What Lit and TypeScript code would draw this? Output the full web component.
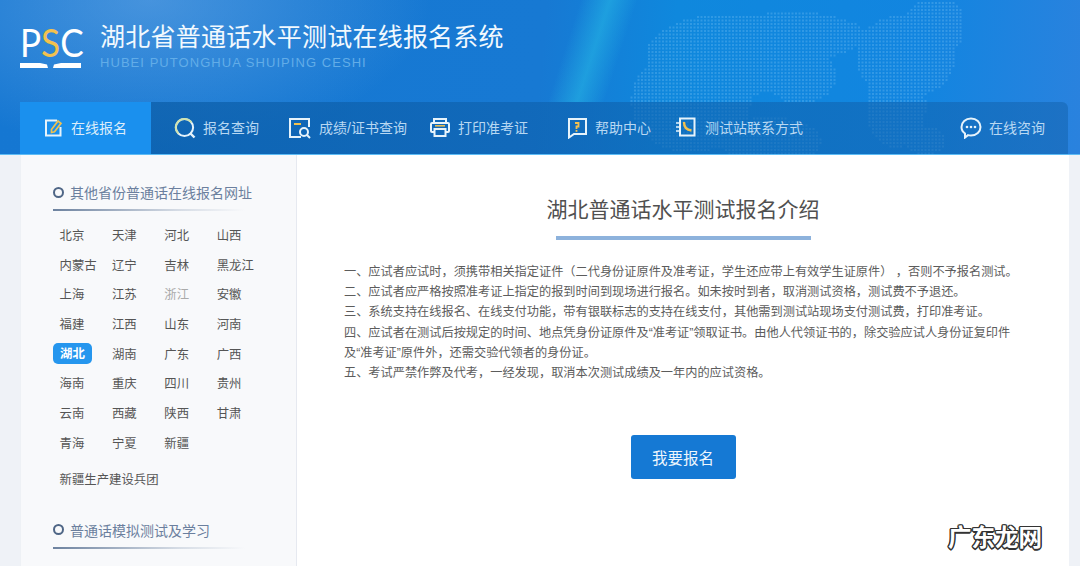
import { LitElement, html, css, svg } from "lit";
import { customElement } from "lit/decorators.js";

const ROWS = [
  ["北京", "天津", "河北", "山西"],
  ["内蒙古", "辽宁", "吉林", "黑龙江"],
  ["上海", "江苏", "浙江", "安徽"],
  ["福建", "江西", "山东", "河南"],
  ["湖北", "湖南", "广东", "广西"],
  ["海南", "重庆", "四川", "贵州"],
  ["云南", "西藏", "陕西", "甘肃"],
  ["青海", "宁夏", "新疆"],
];

const LINES = [
  "一、应试者应试时，须携带相关指定证件（二代身份证原件及准考证，学生还应带上有效学生证原件） ，否则不予报名测试。",
  "二、应试者应严格按照准考证上指定的报到时间到现场进行报名。如未按时到者，取消测试资格，测试费不予退还。",
  "三、系统支持在线报名、在线支付功能，带有银联标志的支持在线支付，其他需到测试站现场支付测试费，打印准考证。",
  "四、应试者在测试后按规定的时间、地点凭身份证原件及“准考证”领取证书。由他人代领证书的，除交验应试人身份证复印件",
  "及“准考证”原件外，还需交验代领者的身份证。",
  "五、考试严禁作弊及代考，一经发现，取消本次测试成绩及一年内的应试资格。",
];

const Y = "#f2c14e";
const W = "#e6f3fb";
const ICONS = {
  edit: svg`<path d="M13 2.500H2v15h14.500V9" fill="none" stroke="${W}" stroke-width="2"/><path d="M7.500 11.500 14 3l3 2.300-6.500 8.500-3 .7z" fill="none" stroke="${Y}" stroke-width="1.700"/>`,
  search: svg`<circle cx="10.500" cy="10.500" r="8.600" fill="none" stroke="${W}" stroke-width="2"/><path d="M4.400 16.600A8.600 8.600 0 0 1 10.500 1.900a8.600 8.600 0 0 1 7 3.600" fill="none" stroke="#cfe3b0" stroke-width="2"/><path d="m16 16 4.500 4.500" stroke="${W}" stroke-width="2.400"/>`,
  cert: svg`<path d="M21 10V2H2v18h11" fill="none" stroke="${W}" stroke-width="2"/><path d="M6 7h7" stroke="${Y}" stroke-width="2"/><circle cx="16" cy="15" r="4" fill="none" stroke="${W}" stroke-width="2"/><path d="m19 18 3 3" stroke="${W}" stroke-width="2"/>`,
  print: svg`<path d="M5 6V2h12v4M5 15H3a1 1 0 0 1-1-1V7a1 1 0 0 1 1-1h16a1 1 0 0 1 1 1v7a1 1 0 0 1-1 1h-2" fill="none" stroke="${W}" stroke-width="2"/><path d="M5.500 12h11v7h-11z" fill="none" stroke="${W}" stroke-width="2"/><path d="M6 8.800h10" stroke="${Y}" stroke-width="1.500"/>`,
  help: svg`<path d="M2 17V2h17v15H7l-5 3.500z" fill="none" stroke="${W}" stroke-width="2"/><path d="M8 6h3.500v3.500H9.500V12" fill="none" stroke="${Y}" stroke-width="1.800"/><path d="M9.500 13v1.800" stroke="${Y}" stroke-width="1.800"/>`,
  phone: svg`<path d="M4 1.500h14.500v17H4z" fill="none" stroke="${W}" stroke-width="2"/><path d="M0 6h4M0 10h4M0 14h4" stroke="${W}" stroke-width="1.300"/><path d="M8 5c0 5 2.500 8 7.500 8.500" fill="none" stroke="${Y}" stroke-width="2.400"/>`,
  chat: svg`<path d="M11 1.500c5.500 0 9.500 3.800 9.500 8.500s-4 8.500-9.500 8.500c-1 0-2-.1-3-.4L5 20.500v-4C2.800 15 1.500 12.700 1.500 10 1.500 5.300 5.500 1.500 11 1.500z" fill="none" stroke="${W}" stroke-width="2"/><circle cx="7" cy="10" r="1.300" fill="${W}"/><circle cx="11" cy="10" r="1.300" fill="${W}"/><circle cx="15" cy="10" r="1.300" fill="${W}"/>`,
};

const NAV = [
  { label: "报名查询", icon: ICONS.search, cls: "n1" },
  { label: "成绩/证书查询", icon: ICONS.cert, cls: "n2" },
  { label: "打印准考证", icon: ICONS.print, cls: "n3" },
  { label: "帮助中心", icon: ICONS.help, cls: "n4" },
  { label: "测试站联系方式", icon: ICONS.phone, cls: "n5" },
];

function mapDots() {
  const blobs: [number, number, number, number][] = [
    [725, 55, 80, 42], [690, 100, 60, 52], [790, 35, 75, 24], [800, 75, 35, 28],
    [905, 55, 50, 42], [935, 25, 32, 28], [895, 105, 30, 42], [770, 140, 50, 24],
    [925, 140, 20, 14],
  ];
  const dots = [];
  for (let x = 627; x < 960; x += 3.5) {
    for (let y = 2; y < 154; y += 3.5) {
      if (blobs.some(([cx, cy, rx, ry]) => ((x - cx) / rx) ** 2 + ((y - cy) / ry) ** 2 < 1)) {
        dots.push(svg`<rect x=${x} y=${y} width="2" height="2"/>`);
      }
    }
  }
  return dots;
}

@customElement("app-root")
export class AppRoot extends LitElement {
  static styles = css`
    :host {
      display: block;
      width: 1080px;
      height: 566px;
      overflow: hidden;
      position: relative;
      background: #eff2f7;
      font-family: "Liberation Sans", "Noto Sans CJK SC", sans-serif;
    }
    .top {
      position: relative;
      height: 155px;
      box-sizing: border-box;
      padding: 0 12px 0 20px;
      display: flex;
      flex-direction: column;
      background:
        radial-gradient(ellipse 280px 150px at 150px 0, rgba(110, 170, 230, 0.55), rgba(110, 170, 230, 0) 100%),
        linear-gradient(95deg, #1577d2 0%, #1779d3 50%, #0f88dd 62%, #1285e0 85%, #2a82de 100%);
      border-bottom: 1px solid #5dbcf5;
    }
    .map {
      position: absolute;
      left: 0;
      top: 0;
      width: 1080px;
      height: 155px;
      fill: #7cc4f5;
      opacity: 0.3;
    }
    .streak {
      position: absolute;
      left: 520px;
      top: 0;
      width: 140px;
      height: 102px;
      background: linear-gradient(108deg, rgba(30, 190, 230, 0) 35%, rgba(40, 190, 230, 0.5) 52%, rgba(30, 190, 230, 0) 68%);
    }
    .brand {
      position: relative;
      height: 102px;
      display: flex;
      align-items: flex-start;
      gap: 19px;
      padding-top: 23px;
      box-sizing: border-box;
    }
    .logo { width: 61px; display: flex; flex-direction: column; }
    .psc {
      font-family: "Lato", "Liberation Sans", sans-serif;
      font-weight: 400;
      font-size: 39px;
      line-height: 34px;
      height: 34px;
      margin-top: 2px;
      color: #fff;
      white-space: nowrap;
      transform: scaleX(0.9);
      transform-origin: left center;
    }
    .psc b { font-weight: 400; color: #f2c14e; }
    .book { display: block; margin-top: 4px; }
    .titles { margin-top: -3px; }
    .cn {
      font-family: "Noto Sans CJK SC", sans-serif;
      font-size: 25px;
      line-height: 30px;
      letter-spacing: 0.24px;
      color: #f2f9fe;
    }
    .en {
      font-size: 13px;
      line-height: 16px;
      margin-top: 5px;
      letter-spacing: 1.05px;
      color: #62ade8;
    }
    nav {
      position: relative;
      flex: 1;
      display: flex;
      align-items: center;
      background: linear-gradient(90deg, rgba(12, 95, 170, 0.82), rgba(14, 96, 172, 0.58) 60%, rgba(20, 100, 175, 0.55));
      border-radius: 0 6px 0 0;
      color: #b8d8f2;
      font-size: 14px;
      font-family: "Liberation Sans", "Noto Sans CJK SC", sans-serif;
    }
    .item { display: flex; align-items: center; gap: 6px; white-space: nowrap; }
    .item svg { flex: none; }
    .item span { position: relative; top: -1px; }
    .active {
      align-self: stretch;
      width: 131px;
      box-sizing: border-box;
      padding-left: 24px;
      background: #1a90ee;
      color: #dcedfb;
      gap: 7px;
    }
    .n1 { margin-left: 23px; }
    .n2 { margin-left: 29px; gap: 8px; }
    .n3 { margin-left: 22px; }
    .n4 { margin-left: 39px; gap: 5px; }
    .n5 { margin-left: 25px; }
    .chat { margin-left: auto; margin-right: 23px; }
    main {
      display: flex;
      align-items: stretch;
      height: 411px;
      padding-left: 20px;
      width: 1069px;
      box-sizing: border-box;
    }
    aside {
      width: 277px;
      flex: none;
      box-sizing: border-box;
      background: #f8f9fb;
      border-right: 1px solid #e6e9f0;
      border-left: 1px solid #eef1f5;
      padding: 27px 0 0 32px;
    }
    .head {
      display: flex;
      align-items: center;
      gap: 6px;
      color: #6b7f9e;
      font-size: 14px;
      line-height: 20px;
      font-family: "Noto Sans CJK SC", sans-serif;
    }
    .ring {
      width: 7px;
      height: 7px;
      border: 2px solid #4f6686;
      border-radius: 50%;
      flex: none;
    }
    .rule {
      width: 192px;
      height: 2px;
      margin-top: 7px;
      background: linear-gradient(90deg, #6d829f, rgba(190, 200, 214, 0.6) 65%, rgba(220, 225, 232, 0));
    }
    .grid {
      margin-top: 9px;
      display: grid;
      grid-template-columns: repeat(4, 52.400px);
      grid-auto-rows: 29.700px;
      align-items: center;
      font-size: 12.400px;
      color: #555;
      font-family: "Noto Sans CJK SC", sans-serif;
    }
    .grid span { padding-left: 6.500px; white-space: nowrap; }
    .grid .off { color: #aaa; }
    .grid .on {
      justify-self: start;
      width: 39px;
      height: 21px;
      line-height: 21px;
      box-sizing: border-box;
      text-align: center;
      padding: 0;
      background: #2596ee;
      color: #fff;
      font-weight: 700;
      border-radius: 5px;
    }
    .long {
      margin-top: 11px;
      padding-left: 6.500px;
      font-size: 12.400px;
      line-height: 20px;
      color: #555;
      font-family: "Noto Sans CJK SC", sans-serif;
    }
    .second { margin-top: 31px; }
    article {
      flex: 1;
      background: #fff;
      display: flex;
      flex-direction: column;
      align-items: center;
      padding-top: 37px;
      box-sizing: border-box;
    }
    h1 {
      margin: 0;
      font-family: "Noto Sans CJK SC", sans-serif;
      font-weight: 400;
      font-size: 21px;
      line-height: 32px;
      color: #505050;
    }
    .bar { width: 255px; height: 4px; background: #8db2dc; margin-top: 12px; }
    .text {
      align-self: flex-start;
      margin: 22px 0 0 47px;
      font-family: "Liberation Sans", "Noto Sans CJK SC", sans-serif;
      font-size: 12.200px;
      line-height: 20.200px;
      color: #5c5c5c;
      white-space: nowrap;
    }
    .btn {
      margin-top: 52px;
      width: 105px;
      height: 44px;
      display: flex;
      align-items: center;
      justify-content: center;
      background: #1579d4;
      color: #eef6fd;
      border-radius: 3px;
      font-family: "Noto Sans CJK SC", sans-serif;
      font-size: 15.500px;
    }
    .mark {
      position: absolute;
      right: 38px;
      bottom: 17px;
      font-family: "Noto Sans CJK SC", sans-serif;
      font-size: 23.500px;
      line-height: 26px;
      font-weight: 700;
      color: #fff;
      text-shadow:
        -1.500px 0 0 #333, 1.500px 0 0 #333, 0 -1.500px 0 #333, 0 1.500px 0 #333,
        -1.100px -1.100px 0 #333, 1.100px -1.100px 0 #333, -1.100px 1.100px 0 #333, 1.100px 1.100px 0 #333;
    }
  `;

  private icon(body: unknown, w = 23, h = 22) {
    return html`<svg width=${w} height=${h} viewBox="0 0 ${w} ${h}">${body}</svg>`;
  }

  render() {
    return html`
      <header class="top">
        <svg class="map" viewBox="0 0 1080 155">${mapDots()}</svg>
        <div class="streak"></div>
        <div class="brand">
          <div class="logo">
            <div class="psc">P<b>S</b>C</div>
            <svg class="book" width="61" height="5" viewBox="0 0 61 5">
              <path d="M0 0h20l7 1.500 1 3.500H0zM61 0H41l-7 1.500-1 3.500h28z" fill="#fff" />
            </svg>
          </div>
          <div class="titles">
            <div class="cn">湖北省普通话水平测试在线报名系统</div>
            <div class="en">HUBEI PUTONGHUA SHUIPING CESHI</div>
          </div>
        </div>
        <nav>
          <div class="item active">${this.icon(ICONS.edit, 20, 20)}<span>在线报名</span></div>
          ${NAV.map(
            (n) => html`<div class="item ${n.cls}">${this.icon(n.icon)}<span>${n.label}</span></div>`
          )}
          <div class="item chat">${this.icon(ICONS.chat)}<span>在线咨询</span></div>
        </nav>
      </header>
      <main>
        <aside>
          <div class="head"><i class="ring"></i>其他省份普通话在线报名网址</div>
          <div class="rule"></div>
          <div class="grid">
            ${ROWS.flat().map(
              (p) => html`<span class=${p === "湖北" ? "on" : p === "浙江" ? "off" : ""}>${p}</span>`
            )}
          </div>
          <div class="long">新疆生产建设兵团</div>
          <div class="head second"><i class="ring"></i>普通话模拟测试及学习</div>
          <div class="rule"></div>
        </aside>
        <article>
          <h1>湖北普通话水平测试报名介绍</h1>
          <div class="bar"></div>
          <div class="text">${LINES.map((l) => html`<div>${l}</div>`)}</div>
          <div class="btn">我要报名</div>
        </article>
      </main>
      <div class="mark">广东龙网</div>
    `;
  }
}
